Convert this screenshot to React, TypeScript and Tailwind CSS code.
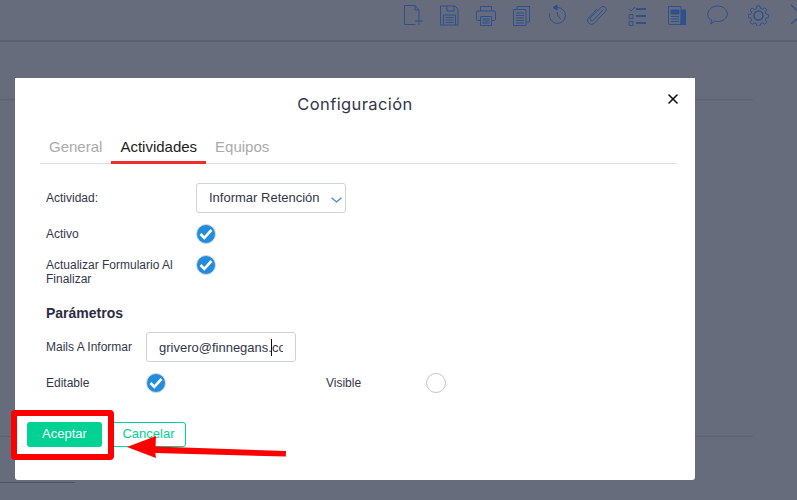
import { X } from 'lucide-react';

const sans = "font-['Liberation_Sans',Arial,sans-serif]";

function ToolbarIcons() {
  return (
    <div className="flex h-[40px] items-start text-[#2d508f] [&>svg]:shrink-0">
      <svg className="mt-[5px] ml-[404px] h-[21px] w-[20px]" viewBox="0 0 20 21" fill="none" stroke="currentColor" strokeWidth="1">
        <path d="M.5.5h10.500l4 4.500v7M11 .5v4.500h4M.5.500v19h11" />
        <path d="M11 16h8M15 12v8" />
      </svg>
      <svg className="mt-[5px] ml-[16px] h-[21px] w-[19px]" viewBox="0 0 19 21" fill="none" stroke="currentColor" strokeWidth="1">
        <path d="M.5 1h14.500l3 3v16H.5z" />
        <path d="M7 1v5h7V1M3.500 10h12v10M3.500 10v10M5.500 12.500h8M5.500 15h8M5.500 17.500h8" />
      </svg>
      <svg className="mt-[5px] ml-[17px] h-[21px] w-[20px]" viewBox="0 0 20 21" fill="none" stroke="currentColor" strokeWidth="1">
        <path d="M4.500 6V1.500h11V6" />
        <path d="M4 15.500H1.500a1 1 0 0 1-1-1V7a1 1 0 0 1 1-1h17a1 1 0 0 1 1 1v7.500a1 1 0 0 1-1 1H16" />
        <path d="M4.500 11.500h11v9h-11zM6.500 14h7M6.500 16h7M6.500 18h7" />
      </svg>
      <svg className="mt-[6px] ml-[17px] h-[20px] w-[17px]" viewBox="0 0 17 20" fill="none" stroke="currentColor" strokeWidth="1">
        <path d="M4 3V.5h12.500V16H13" />
        <path d="M.5 3.500h12.500v16H.5zM3 7h8M3 9.500h8M3 12h8M3 14.500h8M3 17h8" />
      </svg>
      <svg className="mt-[4px] ml-[18px] h-[21px] w-[20px]" viewBox="0 0 20 21" fill="none" stroke="currentColor" strokeWidth="1">
        <path d="M9 3.500a8 8 0 1 1-7.300 6" />
        <path d="M9 1v5L5 3.500z" fill="currentColor" />
        <path d="M9 8l1 4 3 3" />
      </svg>
      <svg className="mt-[5px] ml-[19px] h-[21px] w-[20px]" viewBox="0 0 20 21" fill="none" stroke="currentColor" strokeWidth="1">
        <path d="M16 5L6.500 15a1.800 1.800 0 0 1-3-2.500L14 2.500a3 3 0 0 1 4.500 4L7 18.500a4 4 0 0 1-6-5L10 4" />
      </svg>
      <svg className="mt-[6px] ml-[21px] h-[20px] w-[19px]" viewBox="0 0 19 20" fill="none" stroke="currentColor">
        <path d="M1 3l2 2 4-4" strokeWidth="1" />
        <path d="M1 8.500h4v4H1zM1 15.500h4v4H1z" strokeWidth="1" />
        <path d="M8 3h10M8 10h10M8 17h10" strokeWidth="2" />
      </svg>
      <svg className="mt-[6px] ml-[21px] h-[19px] w-[18px]" viewBox="0 0 18 19" fill="none" stroke="currentColor" strokeWidth="1">
        <path d="M13 18.500H2a1.500 1.500 0 0 1-1.500-1.500V.5h12.500z" />
        <path d="M13.500 4H18v15h-5z" fill="currentColor" />
        <path d="M3 4h8v4H3z" fill="currentColor" />
        <path d="M3 10.500h8M3 13h8M3 15.500h8" />
      </svg>
      <svg className="mt-[5px] ml-[21px] h-[20px] w-[21px]" viewBox="0 0 21 20" fill="none" stroke="currentColor" strokeWidth="1">
        <path d="M5 15.500C2.500 14.300.7 12.300.7 9.500.7 5 5 1 10.500 1s9.800 3.500 9.800 8-4.300 7.500-9.800 7.500c-1 0-2-.1-2.800-.3L3.500 19z" />
      </svg>
      <svg className="mt-[5px] ml-[20px] h-[21px] w-[21px]" viewBox="0 0 21 21" fill="none" stroke="currentColor" strokeWidth="1">
        <path d="M9 .8h3l.5 2.700 2 .8 2.300-1.500 2 2-1.500 2.300.8 2 2.700.5v3l-2.700.5-.8 2 1.500 2.300-2 2-2.300-1.500-2 .8-.5 2.700H9l-.5-2.700-2-.8-2.300 1.500-2-2 1.500-2.300-.8-2-2.700-.5v-3l2.700-.5.8-2L2.200 5l2-2 2.300 1.500 2-.8z" />
        <circle cx="10.500" cy="10.500" r="4.500" strokeWidth="1.500" />
      </svg>
      <svg className="mt-[4px] ml-[21px] h-[20px] w-[12px]" viewBox="0 0 12 20" fill="none" stroke="currentColor" strokeWidth="1.200">
        <path d="M1 1l11 10M1 20l11-10" />
      </svg>
    </div>
  );
}

function RoundCheck({ on = true }: { on?: boolean }) {
  if (!on) {
    return <span className="block h-5 w-5 rounded-full border border-[#c4c6cb] bg-white" />;
  }
  return (
    <span className="block h-5 w-5 rounded-full border border-[#d5d9de] bg-[#238ddb]">
      <svg className="h-[18px] w-[18px]" viewBox="0 0 18 18" fill="none" stroke="white" strokeWidth="2.600">
        <path d="M3.500 9l3.800 3.800L14.500 5" />
      </svg>
    </span>
  );
}

export default function App() {
  return (
    <div className={`relative h-[500px] w-[797px] overflow-hidden bg-[#676c7c] ${sans}`}>
      <div className="h-[42px] border-b-2 border-[#5c606e]">
        <ToolbarIcons />
      </div>
      <div className="mt-[57px] w-[753px] border-t border-[#5c606e]" />
      <div className="mt-[336px] w-[753px] border-t border-[#5c606e]" />
      <div className="mt-[45px] w-[75px] border-t border-[#4f5360]" />

      {/* modal */}
      <div className="absolute top-[78px] left-[15px] flex h-[402px] w-[680px] flex-col rounded-b-[3px] bg-white">
        <div className="relative flex h-[52px] items-center justify-center">
          <h2 className="font-['Inter',sans-serif] text-[16.500px] leading-none font-normal tracking-[0.4px] text-[#33364a]">Configuración</h2>
          <button className="absolute top-[13px] right-[14px] text-[#111]">
            <X className="h-[16px] w-[16px]" strokeWidth={2.400} />
          </button>
        </div>

        <div className="mx-[25px] flex h-[34px] w-[637px] border-b border-[#dedede] pt-[6px] text-[15px] leading-[22px]">
          <span className="ml-[9px] text-[#aaaaaa]">General</span>
          <span className="ml-[9px] -mb-px h-[28px] border-b-[3px] border-[#f22b2b] px-[9px] text-[#1c1c22]">Actividades</span>
          <span className="ml-[9px] text-[#aaaaaa]">Equipos</span>
        </div>

        <div className="flex flex-col pl-[31px] text-[12px] text-[#33364a]">
          <div className="mt-[19px] flex h-[30px] items-center">
            <span className="w-[150px] pb-[1px]">Actividad:</span>
            <div className="flex h-[30px] w-[150px] items-center rounded-[3px] border border-[#cfd2d6] pl-[12px] text-[13px]">
              <span>Informar Retención</span>
              <svg className="mt-[3px] ml-[11px] h-[6px] w-[11px]" viewBox="0 0 11 6" fill="none" stroke="#4a86d8" strokeWidth="1.300">
                <path d="M.5.700L5.500 5l5-4.300" />
              </svg>
            </div>
          </div>

          <div className="mt-[11px] flex h-[20px] items-center">
            <span className="w-[150px]">Activo</span>
            <RoundCheck />
          </div>

          <div className="mt-[11px] flex items-start">
            <span className="w-[150px] pt-[3px] leading-[14px]">Actualizar Formulario Al Finalizar</span>
            <RoundCheck />
          </div>

          <h3 className="mt-[17px] text-[14px] leading-[20px] font-bold text-[#2b2d42]">Parámetros</h3>

          <div className="mt-[9px] flex h-[30px] items-center">
            <span className="w-[100px] pb-[1px]">Mails A Informar</span>
            <div className="relative h-[30px] w-[150px] rounded-[3px] border border-[#cfd2d6]">
              <input
                readOnly
                value="grivero@finnegans.com"
                className="h-full w-full bg-transparent px-[12px] text-[13px] text-[#33364a] outline-none"
              />
              <span className="absolute top-[6px] left-[124px] h-[17px] w-px bg-[#111]" />
            </div>
          </div>

          <div className="mt-[11px] flex h-[20px] items-center">
            <span className="w-[100px]">Editable</span>
            <RoundCheck />
            <span className="ml-[160px] w-[100px]">Visible</span>
            <RoundCheck on={false} />
          </div>
        </div>

        <div className="mt-[29px] flex gap-[9px] pl-[12px] text-[13px]">
          <button className="h-[25px] w-[75px] rounded-[3px] bg-[#00d293] pb-[2px] text-white">Aceptar</button>
          <button className="h-[25px] w-[75px] rounded-[3px] border border-[#00d293] pb-[2px] text-[#00d293]">Cancelar</button>
        </div>
      </div>

      {/* annotation */}
      <div className="absolute top-[410px] left-[11px] h-[50px] w-[103px] rounded-[4px] border-[6px] border-[#ff0000]" />
      <svg className="absolute top-[430px] left-[120px] h-[35px] w-[170px]" viewBox="0 0 170 35" fill="#ff0000">
        <path d="M7 17L36 6l-.5 10.500 130.500 4.500-.2 5.500-130.500-3.500L36 28z" />
      </svg>
    </div>
  );
}
